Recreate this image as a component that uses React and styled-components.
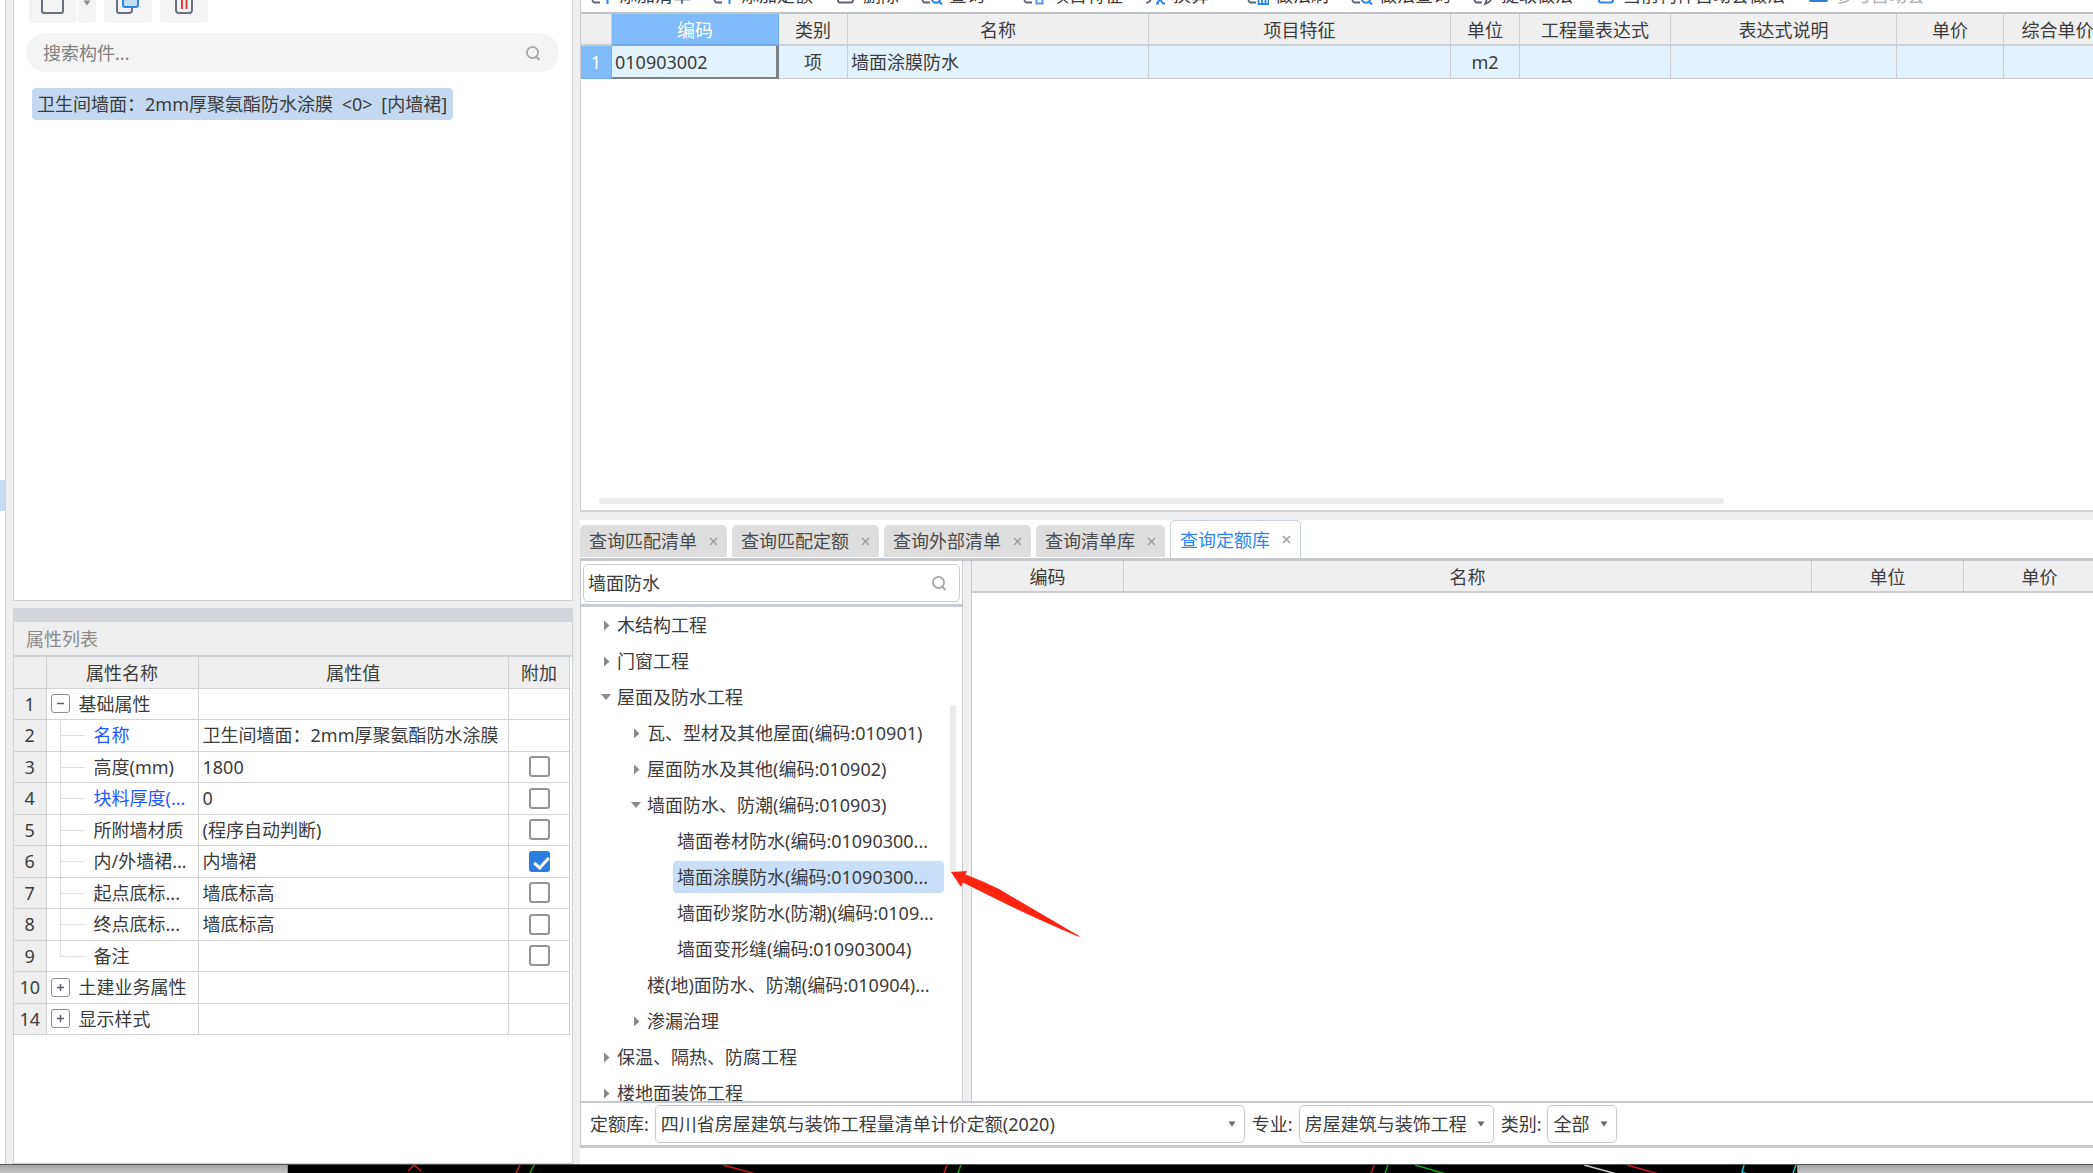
import React, { useState } from "react";
import styled, { createGlobalStyle } from "styled-components";

const Global = createGlobalStyle`
  * { box-sizing: border-box; }
  html, body { margin: 0; overflow: hidden; }
  body, button, input, select, table {
    font-family: "Noto Sans", "Noto Sans CJK SC", sans-serif;
    font-size: 18px;
    line-height: 24px;
    color: #3c3c3c;
  }
`;

/* ---------- shell ---------- */
const Shell = styled.div`
  display: flex;
  flex-direction: column;
  height: 100vh;
  overflow: hidden;
  background: #fff;
`;
const Workspace = styled.main`
  flex: 1;
  min-height: 0;
  display: grid;
  grid-template-columns: 5px 8px minmax(0, 560fr) 7px minmax(0, 1513fr);
`;
const Rail = styled.div`
  padding-top: 480px;
  background: #fff;
`;
const RailMark = styled.div`
  height: 31px;
  background: #c5dcf7;
`;
const Splitter = styled.div`
  background: #efefef;
  border-left: 1px solid #d0d0d0;
`;
const LeftColumn = styled.section`
  min-height: 0;
  display: grid;
  grid-template-rows: minmax(0, 601fr) 7px minmax(0, 556fr);
  background: #efefef;
`;
const RightColumn = styled.section`
  min-width: 0;
  min-height: 0;
  display: grid;
  grid-template-rows: minmax(0, 512fr) 8px minmax(0, 628fr) 16px;
  background: #fff;
`;
const Gap = styled.div`
  background: #efefef;
`;

/* ---------- component list ---------- */
const Panel = styled.div`
  display: flex;
  flex-direction: column;
  min-height: 0;
  overflow: hidden;
  background: #fff;
  border: solid #d0d3d6;
  border-width: 0 1px 1px;
`;
const ButtonBar = styled.div`
  display: flex;
  align-items: flex-end;
  gap: 8px;
  height: 23px;
  padding-left: 15px;
`;
const SplitGroup = styled.div`
  display: flex;
  gap: 1px;
`;
const BarButton = styled.button`
  display: flex;
  flex: none;
  align-items: center;
  justify-content: center;
  width: ${(p) => (p.$narrow ? 18 : 48)}px;
  height: 40px;
  padding: 0;
  border: 0;
  border-radius: 4px;
  background: #f4f4f4;
`;
const SearchPill = styled.label`
  display: flex;
  align-items: center;
  height: 39px;
  margin: 10px 13px 0 12px;
  padding: 0 18px 0 17px;
  border-radius: 20px;
  background: #f4f4f4;
`;
const BareInput = styled.input`
  flex: 1;
  min-width: 0;
  padding: 0;
  border: 0;
  outline: 0;
  background: transparent;
  &::placeholder { color: #808080; opacity: 1; }
`;
const ComponentItem = styled.button`
  display: flex;
  gap: 4px;
  align-items: center;
  align-self: flex-start;
  height: 32px;
  margin: 16px 0 0 18px;
  padding: 0 6px 0 5px;
  border: 0;
  border-radius: 4px;
  background: #c2d9f1;
  white-space: pre;
`;

/* ---------- property list ---------- */
const DragStrip = styled.div`
  height: 14px;
  background: #d3d5da;
`;
const PanelTitle = styled.h2`
  height: 35px;
  margin: 0;
  padding: 5px 12px;
  border-bottom: 2px solid #d0d3d8;
  background: #efefef;
  color: #8a8a8a;
  font-size: 18px;
  font-weight: 400;
`;
const PropertyTable = styled.table`
  width: calc(100% - 2px);
  height: 378px;
  border-collapse: collapse;
  table-layout: fixed;
  th, td {
    height: 31px;
    padding: 0;
    border: 1px solid #d2d2d2;
    border-left-width: 0;
    border-top-width: 0;
    font-weight: 400;
    white-space: nowrap;
    overflow: hidden;
    line-height: 24px;
  }
  th { background: #efefef; text-align: center; }
  thead th { padding-top: 2px; }
  th:last-child, td:last-child { text-align: center; }
`;
const ValueCell = styled.td`
  && { padding-left: 4px; }
`;
const NameBox = styled.div`
  display: flex;
  align-items: center;
  height: 30px;
  padding-left: ${(p) => (p.$child ? 13 : 4)}px;
  color: ${(p) => (p.$link ? "#1e5bff" : "#3c3c3c")};
`;
const Toggle = styled.button`
  display: flex;
  align-items: center;
  justify-content: center;
  width: 19px;
  height: 19px;
  margin-right: 9px;
  padding: 0;
  border: 1px solid #8c8c8c;
  border-radius: 3px;
  background: #fff;
`;
const Branch = styled.span`
  align-self: flex-start;
  width: 25px;
  height: ${(p) => (p.$last ? 16 : 31)}px;
  margin-right: 9px;
  border-left: 1px solid #e0e0e0;
  background: linear-gradient(#e0e0e0, #e0e0e0) 0 15px / 100% 1px no-repeat;
`;
const Check = styled.input`
  appearance: none;
  display: block;
  width: 21px;
  height: 21px;
  margin: 0 auto;
  border: 2px solid #949494;
  border-radius: 3px;
  background: #fff;
  &:checked { border-color: #2b7de0; background: #2b7de0; }
  &:checked::after {
    content: "";
    display: block;
    width: 6px;
    height: 12px;
    margin: 1px 6px;
    border: solid #fff;
    border-width: 0 3px 3px 0;
    transform: rotate(42deg);
  }
`;

/* ---------- bill of quantities ---------- */
const BillPane = styled.div`
  display: flex;
  flex-direction: column;
  min-height: 0;
  overflow: hidden;
  border-left: 1px solid #c8cacd;
  border-bottom: 2px solid #d2d3d4;
  padding-bottom: 6px;
`;
const ToolBar = styled.div`
  flex: none;
  display: flex;
  align-items: flex-end;
  gap: 22px;
  height: 14px;
  overflow: hidden;
  padding-left: 10px;
  border-bottom: 2px solid #c0c4c9;
`;
const Tool = styled.button`
  display: flex;
  flex: none;
  align-items: center;
  height: 34px;
  padding: 0 ${(p) => (p.$menu ? 16 : 0)}px 0 0;
  border: 0;
  background: transparent;
  color: ${(p) => (p.$muted ? "#b0b0b0" : "#3c3c3c")};
  white-space: nowrap;
  svg { width: 22px; height: 24px; margin-right: 6px; }
`;
const GridScroll = styled.div`
  flex: 1;
  min-height: 0;
  overflow: hidden;
`;
const DataTable = styled.table`
  width: ${(p) => p.$width}px;
  border-collapse: separate;
  border-spacing: 0;
  table-layout: fixed;
  th, td {
    padding: 0;
    border-right: 1px solid #d0d0d0;
    font-weight: 400;
    white-space: nowrap;
    text-align: center;
  }
  th {
    height: 32px;
    padding-top: 2px;
    border-bottom: 2px solid #cdcdcd;
    background: #efefef;
  }
`;
const ActiveHead = styled.th`
  && {
    background: #80bbfa;
    border-color: #72acec;
    color: #fff;
  }
`;
const BillCell = styled.td`
  && {
    height: 33px;
    padding: 0 3px;
    background: #e3f2ff;
    border-bottom: 1px solid #cdcdcd;
    text-align: ${(p) => (p.$left ? "left" : "center")};
  }
`;
const RowIndex = styled(BillCell)`
  && {
    padding: 0;
    background: #80bbfa;
    border-color: #72acec;
    color: #fff;
  }
`;
const FocusCell = styled(BillCell)`
  && {
    border-right: 3px solid #808080;
    border-bottom: 2px solid #808080;
  }
`;
const ScrollThumb = styled.div`
  flex: none;
  width: calc(75% - 9px);
  height: 6px;
  margin: 0 0 0 18px;
  border-radius: 3px;
  background: #ebebeb;
`;

/* ---------- query pane ---------- */
const QueryPane = styled.div`
  display: flex;
  flex-direction: column;
  min-height: 0;
`;
const TabRow = styled.div`
  flex: none;
  display: flex;
  align-items: flex-end;
  gap: 5px;
  height: 41px;
  border-bottom: 3px solid #c5c9cd;
`;
const Tab = styled.div`
  display: flex;
  align-items: center;
  gap: 12px;
  height: ${(p) => (p.$active ? 38 : 32)}px;
  margin-bottom: ${(p) => (p.$active ? 0 : 1)}px;
  padding: 0 9px;
  border: solid #c9d0d8;
  border-width: ${(p) => (p.$active ? "1px 1px 0" : "0")};
  border-radius: 5px 5px 0 0;
  background: ${(p) => (p.$active ? "#fff" : "#dedede")};
`;
const TabLabel = styled.button`
  padding: 0;
  border: 0;
  background: transparent;
  color: ${(p) => (p.$active ? "#2b86ee" : "#4a4a4a")};
  white-space: nowrap;
`;
const TabClose = styled.button`
  display: flex;
  padding: 0;
  border: 0;
  background: transparent;
`;
const QueryBody = styled.div`
  flex: 1;
  min-height: 0;
  display: grid;
  grid-template-columns: minmax(0, 382fr) 9px minmax(0, 1121fr);
  border-left: 1px solid #c5c9cd;
`;
const TreePane = styled.div`
  display: flex;
  flex-direction: column;
  min-height: 0;
  border-right: 1px solid #c8cacd;
`;
const SearchArea = styled.div`
  flex: none;
  padding: 3px 2px 2px;
  border-bottom: 3px solid #c9cdd1;
`;
const SearchBox = styled.label`
  display: flex;
  align-items: center;
  height: 38px;
  padding: 0 12px 0 4px;
  border: 1px solid #cccccc;
  border-radius: 5px;
`;
const TreeArea = styled.div`
  flex: 1;
  min-height: 0;
  display: flex;
  overflow-x: visible;
  overflow-y: clip;
`;
const TreeList = styled.ul`
  flex: 1;
  min-width: 0;
  margin: 0;
  padding: 0;
  list-style: none;
`;
const TreeRow = styled.li`
  display: flex;
  align-items: center;
  height: 36px;
  padding-left: ${(p) => 17 + p.$level * 30}px;
`;
const Twist = styled.button`
  display: flex;
  flex: none;
  align-items: center;
  justify-content: center;
  width: 16px;
  height: 24px;
  padding: 0;
  border: 0;
  background: transparent;
`;
const TreeLabel = styled.button`
  height: 32px;
  padding: 0 4px;
  border: 0;
  border-radius: 4px;
  flex: ${(p) => (p.$selected ? 1 : "none")};
  margin-left: -1px;
  background: ${(p) => (p.$selected ? "#c7dff9" : "transparent")};
  text-align: left;
  white-space: nowrap;
`;
const TreeScroll = styled.div`
  flex: none;
  width: 18px;
  padding: 98px 6px 0;
`;
const TreeThumb = styled.div`
  height: 168px;
  border-radius: 3px;
  background: #ebebeb;
`;
const Divider = styled(Gap)`
  border-right: 1px solid #c8cacd;
`;
const ResultPane = styled.div`
  overflow: hidden;
`;
const FilterBar = styled.div`
  flex: none;
  display: flex;
  align-items: center;
  height: 47px;
  padding-left: 9px;
  border: solid #c5c9cd;
  border-width: 2px 0 3px 1px;
`;
const FilterLabel = styled.label`
  flex: none;
  margin-right: 6px;
`;
const SelectWrap = styled.span`
  position: relative;
  flex: 0 1 ${(p) => p.$width}px;
  margin-right: 7px;
  svg { position: absolute; right: 9px; top: 16px; pointer-events: none; }
`;
const Select = styled.select`
  appearance: none;
  display: block;
  width: 100%;
  height: 38px;
  padding: 0 20px 0 5px;
  border: 1px solid #c9c9c9;
  border-radius: 5px;
  background: #fff;
`;

/* ---------- drawing canvas strip ---------- */
const CanvasStrip = styled.footer`
  flex: none;
  display: grid;
  grid-template-columns: minmax(0, 288fr) minmax(0, 1509fr) minmax(0, 296fr);
  height: 9px;
  border-top: 1px solid #555;
`;
const StripEdge = styled.div`
  background: linear-gradient(#a4a4a4, #c6c6c6);
  border: solid #8e8e8e;
  border-width: 0 ${(p) => (p.$left ? "1px" : "0")} 0 ${(p) => (p.$left ? "0" : "1px")};
`;
const CanvasView = styled.svg`
  display: block;
  width: 100%;
  height: 8px;
  background: #000;
`;
const Pointer = styled.svg`
  position: absolute;
  z-index: 2;
  left: calc(100% + 6px);
  top: 10px;
  width: 130px;
  height: 68px;
  pointer-events: none;
`;
const PointerAnchor = styled.span`
  position: relative;
  display: flex;
  flex: 1;
`;

/* ---------- icons ---------- */
const SearchIcon = () => (
  <svg width="16" height="16" viewBox="0 0 16 16" fill="none" stroke="#a6a6a6" strokeWidth="1.8">
    <circle cx="7.5" cy="7.5" r="5.6" />
    <path d="M11 11.500 14.500 15" />
  </svg>
);
const Caret = ({ color = "#666" }) => (
  <svg width="8" height="6" viewBox="0 0 8 6"><path d="M0.5 0.5h7L4 5.5z" fill={color} /></svg>
);
const Cross = () => (
  <svg width="9" height="9" viewBox="0 0 9 9" stroke="#9a9a9a" strokeWidth="1.4"><path d="M1 1l7 7M8 1l-7 7" /></svg>
);
const PlusMinus = ({ open }) => (
  <svg width="9" height="9" viewBox="0 0 9 9" stroke="#5a6070" strokeWidth="1.5">
    <path d={open ? "M1 4.5h7" : "M1 4.5h7M4.5 1v7"} />
  </svg>
);
const page = "M9 19.5H4a2.5 2.5 0 0 1-2.5-2.5V6A2.5 2.5 0 0 1 4 3.500h10a2.500 2.500 0 0 1 2.500 2.500v4";
const toolGlyphs = {
  add: <><path d={page} stroke="#5d6372" /><path d="M16.500 10v11M11 15.500h11" stroke="#2b86ee" strokeWidth="2" /></>,
  remove: <><path d="M3 5v12.500a2 2 0 0 0 2 2h11a2 2 0 0 0 2-2V5" stroke="#5d6372" /><path d="M8 8l5 6M13 8l-5 6" stroke="#e04040" /></>,
  find: <><path d={page} stroke="#5d6372" /><circle cx="15" cy="15.500" r="4.200" stroke="#2b86ee" strokeWidth="2" /><path d="M18 18.500l3 3" stroke="#2b86ee" strokeWidth="2" /></>,
  feature: <><path d={page} stroke="#5d6372" /><path d="M5 15.500h4" stroke="#5d6372" /><path d="M13.500 13h6v7.500h-6zM16.500 13v-3" stroke="#5c97f2" strokeWidth="2" /></>,
  convert: <><path d="M1 19.500c4 1 5-3 6-8" stroke="#5d6372" /><path d="M12 12l6 8.500M18 12l-6 8.500M11 20.500h3M17 20.500h3" stroke="#2b86ee" strokeWidth="2" /></>,
  brush: <><path d={page} stroke="#5d6372" /><path d="M11.500 13h10v8h-10zM15 13v8M18.500 13v8" stroke="#2b86ee" /></>,
  extract: <><path d={page} stroke="#5d6372" /><path d="M12 21l2-5 6-6 2 2-6 7z" stroke="#5d6372" /></>,
  auto: <><path d="M4 5v12.500a2 2 0 0 0 2 2h10a2 2 0 0 0 2-2V5z" stroke="#2b86ee" strokeWidth="2" /><path d="M8 14h6" stroke="#2b86ee" /></>,
  check: <rect x="2" y="3" width="19" height="16" rx="2" fill="#2b7de0" />,
};
const tools = [
  ["add", "添加清单"],
  ["add", "添加定额"],
  ["remove", "删除"],
  ["find", "查询", true],
  ["feature", "项目特征"],
  ["convert", "换算", true],
  ["brush", "做法刷"],
  ["find", "做法查询"],
  ["extract", "提取做法"],
  ["auto", "当前构件自动套做法"],
  ["check", "参与自动套", false, true],
];

const properties = [
  { no: 1, name: "基础属性", group: "open" },
  { no: 2, name: "名称", value: "卫生间墙面：2mm厚聚氨酯防水涂膜", link: true },
  { no: 3, name: "高度(mm)", value: "1800", check: false },
  { no: 4, name: "块料厚度(...", value: "0", check: false, link: true },
  { no: 5, name: "所附墙材质", value: "(程序自动判断)", check: false },
  { no: 6, name: "内/外墙裙...", value: "内墙裙", check: true },
  { no: 7, name: "起点底标...", value: "墙底标高", check: false },
  { no: 8, name: "终点底标...", value: "墙底标高", check: false },
  { no: 9, name: "备注", value: "", check: false, last: true },
  { no: 10, name: "土建业务属性", group: "closed" },
  { no: 14, name: "显示样式", group: "closed" },
];

const tree = [
  [0, "closed", "木结构工程"],
  [0, "closed", "门窗工程"],
  [0, "open", "屋面及防水工程"],
  [1, "closed", "瓦、型材及其他屋面(编码:010901)"],
  [1, "closed", "屋面防水及其他(编码:010902)"],
  [1, "open", "墙面防水、防潮(编码:010903)"],
  [2, "leaf", "墙面卷材防水(编码:01090300..."],
  [2, "leaf", "墙面涂膜防水(编码:01090300..."],
  [2, "leaf", "墙面砂浆防水(防潮)(编码:0109..."],
  [2, "leaf", "墙面变形缝(编码:010903004)"],
  [1, "leaf", "楼(地)面防水、防潮(编码:010904)..."],
  [1, "closed", "渗漏治理"],
  [0, "closed", "保温、隔热、防腐工程"],
  [0, "closed", "楼地面装饰工程"],
];

const tabs = ["查询匹配清单", "查询匹配定额", "查询外部清单", "查询清单库", "查询定额库"];

function ComponentList() {
  return (
    <Panel>
      <ButtonBar>
        <SplitGroup>
          <BarButton aria-label="新建">
            <svg width="26" height="24" viewBox="0 0 26 24" fill="none" stroke="#6a7080" strokeWidth="2">
              <path d="M2 2v18a2 2 0 0 0 2 2h17a2 2 0 0 0 2-2V2z" />
            </svg>
          </BarButton>
          <BarButton $narrow aria-label="新建选项"><Caret color="#8a8a8a" /></BarButton>
        </SplitGroup>
        <BarButton aria-label="复制">
          <svg width="26" height="24" viewBox="0 0 26 24" fill="none" strokeWidth="2">
            <path d="M2 4v16a2 2 0 0 0 2 2h10a3 3 0 0 0 3-3V4z" stroke="#6a7080" />
            <rect x="8" y="1" width="15" height="15" rx="2" fill="#c5dcf7" stroke="#2b86ee" />
          </svg>
        </BarButton>
        <BarButton aria-label="删除">
          <svg width="24" height="24" viewBox="0 0 24 24" fill="none" strokeWidth="2">
            <path d="M4 4v15a3 3 0 0 0 3 3h10a3 3 0 0 0 3-3V4z" stroke="#6a7080" />
            <path d="M10 7v11M14.500 7v11" stroke="#e0393e" />
          </svg>
        </BarButton>
      </ButtonBar>
      <SearchPill>
        <BareInput aria-label="搜索构件" placeholder="搜索构件..." />
        <SearchIcon />
      </SearchPill>
      <ComponentItem>
        <span>卫生间墙面：2mm厚聚氨酯防水涂膜{" "}</span>
        <span>&lt;0&gt;{" "}</span>
        <span>[内墙裙]</span>
      </ComponentItem>
    </Panel>
  );
}

function PropertyList() {
  return (
    <Panel>
      <DragStrip />
      <PanelTitle>属性列表</PanelTitle>
      <PropertyTable>
        <colgroup>
          <col style={{ width: "32px" }} />
          <col style={{ width: "152px" }} />
          <col />
          <col style={{ width: "61px" }} />
        </colgroup>
        <thead>
          <tr><th aria-label="序号" /><th>属性名称</th><th>属性值</th><th>附加</th></tr>
        </thead>
        <tbody>
          {properties.map((p) => (
            <tr key={p.no}>
              <th scope="row">{p.no}</th>
              <td>
                <NameBox $child={!p.group} $link={p.link}>
                  {p.group ? (
                    <Toggle aria-label={p.name}><PlusMinus open={p.group === "open"} /></Toggle>
                  ) : (
                    <Branch $last={p.last} />
                  )}
                  {p.name}
                </NameBox>
              </td>
              <ValueCell>{p.value}</ValueCell>
              <td>
                {p.check !== undefined && (
                  <Check type="checkbox" defaultChecked={p.check} aria-label={p.name} />
                )}
              </td>
            </tr>
          ))}
        </tbody>
      </PropertyTable>
    </Panel>
  );
}

const billColumns = [31, 167, 69, 301, 302, 69, 151, 226, 107, 108];

function BillOfQuantities() {
  return (
    <BillPane>
      <ToolBar>
        {tools.map(([icon, label, menu, muted]) => (
          <Tool key={label} $menu={menu} $muted={muted}>
            <svg viewBox="0 0 22 24" fill="none" strokeWidth="1.800">{toolGlyphs[icon]}</svg>
            {label}
          </Tool>
        ))}
      </ToolBar>
      <GridScroll>
        <DataTable $width={billColumns.reduce((a, b) => a + b, 0)}>
          <colgroup>
            {billColumns.map((w, i) => <col key={i} style={{ width: w }} />)}
          </colgroup>
          <thead>
            <tr>
              <th aria-label="序号" />
              <ActiveHead>编码</ActiveHead>
              <th>类别</th><th>名称</th><th>项目特征</th><th>单位</th>
              <th>工程量表达式</th><th>表达式说明</th><th>单价</th><th>综合单价</th>
            </tr>
          </thead>
          <tbody>
            <tr>
              <RowIndex>1</RowIndex>
              <FocusCell $left>010903002</FocusCell>
              <BillCell>项</BillCell>
              <BillCell $left>墙面涂膜防水</BillCell>
              <BillCell />
              <BillCell>m2</BillCell>
              <BillCell /><BillCell /><BillCell /><BillCell />
            </tr>
          </tbody>
        </DataTable>
      </GridScroll>
      <ScrollThumb />
    </BillPane>
  );
}

const Arrow = () => (
  <Pointer viewBox="0 0 130 68" aria-hidden="true">
    <path d="M1 1 17 0 15.500 3.500Q32 9.500 49 18L130 65.500 128 65.500Q80 45 46 28L13 11.500 11 16z" fill="#ff2312" />
  </Pointer>
);

function QueryPanel() {
  const [active, setActive] = useState(4);
  const [selected, setSelected] = useState(7);
  const [term, setTerm] = useState("墙面防水");
  return (
    <QueryPane>
      <TabRow>
        {tabs.map((t, i) => (
          <Tab key={t} $active={i === active}>
            <TabLabel $active={i === active} onClick={() => setActive(i)}>{t}</TabLabel>
            <TabClose aria-label={"关闭" + t}><Cross /></TabClose>
          </Tab>
        ))}
      </TabRow>
      <QueryBody>
        <TreePane>
          <SearchArea>
            <SearchBox>
              <BareInput aria-label="查询" value={term} onChange={(e) => setTerm(e.target.value)} />
              <SearchIcon />
            </SearchBox>
          </SearchArea>
          <TreeArea>
            <TreeList>
              {tree.map(([level, state, label], i) => {
                const node = (
                  <TreeLabel $selected={i === selected} onClick={() => setSelected(i)}>{label}</TreeLabel>
                );
                return (
                  <TreeRow key={label + i} $level={level}>
                    <Twist aria-label={label} disabled={state === "leaf"}>
                      {state === "open" && (
                        <svg width="10" height="8" viewBox="0 0 10 8"><path d="M0 1h10L5 7z" fill="#8a8a8a" /></svg>
                      )}
                      {state === "closed" && (
                        <svg width="7" height="11" viewBox="0 0 7 11"><path d="M1 0.500 6.500 5.500 1 10.500z" fill="#8a8a8a" /></svg>
                      )}
                    </Twist>
                    {i === selected ? <PointerAnchor>{node}<Arrow /></PointerAnchor> : node}
                  </TreeRow>
                );
              })}
            </TreeList>
            <TreeScroll><TreeThumb /></TreeScroll>
          </TreeArea>
        </TreePane>
        <Divider />
        <ResultPane>
          <DataTable $width={1144}>
            <colgroup>
              <col style={{ width: 152 }} /><col style={{ width: 688 }} />
              <col style={{ width: 152 }} /><col style={{ width: 152 }} />
            </colgroup>
            <thead>
              <tr><th>编码</th><th>名称</th><th>单位</th><th>单价</th></tr>
            </thead>
          </DataTable>
        </ResultPane>
      </QueryBody>
      <FilterBar>
        <FilterLabel htmlFor="library">定额库:</FilterLabel>
        <SelectWrap $width={590}>
          <Select id="library"><option>四川省房屋建筑与装饰工程量清单计价定额(2020)</option></Select>
          <Caret />
        </SelectWrap>
        <FilterLabel htmlFor="major">专业:</FilterLabel>
        <SelectWrap $width={195}>
          <Select id="major"><option>房屋建筑与装饰工程</option></Select>
          <Caret />
        </SelectWrap>
        <FilterLabel htmlFor="kind">类别:</FilterLabel>
        <SelectWrap $width={70}>
          <Select id="kind"><option>全部</option></Select>
          <Caret />
        </SelectWrap>
      </FilterBar>
    </QueryPane>
  );
}

export default function App() {
  return (
    <Shell>
      <Global />
      <Workspace>
        <Rail><RailMark /></Rail>
        <Splitter />
        <LeftColumn>
          <ComponentList />
          <Gap />
          <PropertyList />
        </LeftColumn>
        <Gap />
        <RightColumn>
          <BillOfQuantities />
          <Gap />
          <QueryPanel />
        </RightColumn>
      </Workspace>
      <CanvasStrip>
        <StripEdge $left />
        <CanvasView viewBox="0 0 1509 8" preserveAspectRatio="none" fill="none" strokeWidth="1.500">
          <path d="M120 6 126 0 133 6M228 8l4-8M435 0l33 9M656 8l3-8M1083 8l3-8M1339 0l32 9" stroke="#d0161b" />
          <path d="M242 8l4-8M670 8l3-8M1097 8l3-8M1127 0l31 9" stroke="#12a012" />
          <path d="M1296 0l33 9" stroke="#c8c8c8" />
          <path d="M1456 0l-2 7 5 2M1508 0l-3 8" stroke="#19c5c5" />
        </CanvasView>
        <StripEdge />
      </CanvasStrip>
    </Shell>
  );
}
